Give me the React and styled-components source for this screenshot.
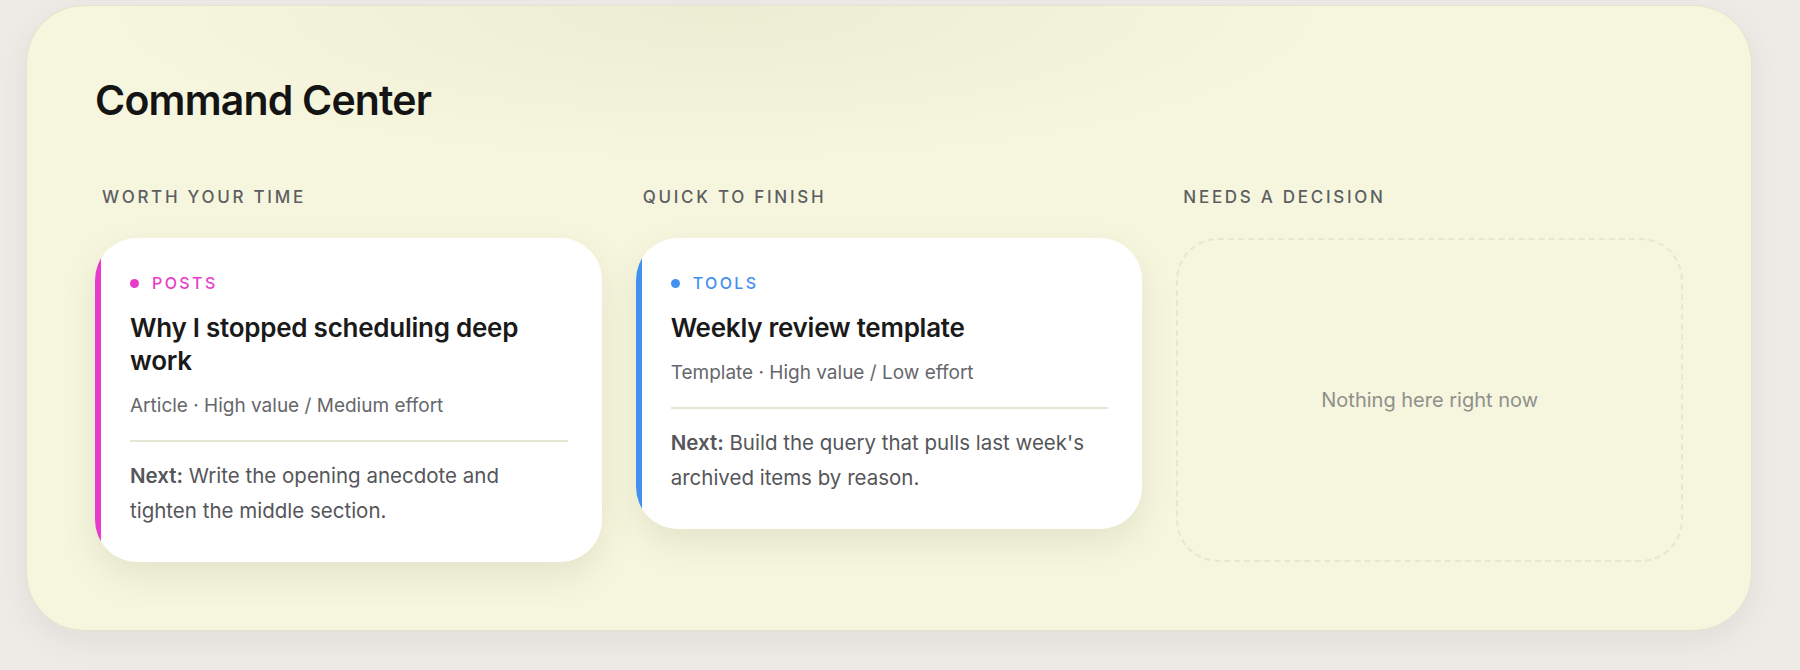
import React from "react";
import styled, { createGlobalStyle } from "styled-components";

const GlobalStyle = createGlobalStyle`
  * {
    box-sizing: border-box;
  }
  body {
    margin: 0;
    background: #ecebe6;
    font-family: Inter, "Noto Sans", sans-serif;
    -webkit-font-smoothing: antialiased;
  }
`;

const Page = styled.div`
  padding: 5px 48px 40px 26px;
`;

const Panel = styled.section`
  background: radial-gradient(
      ellipse 50% 35% at 40% 0%,
      rgba(222, 222, 196, 0.4),
      rgba(246, 246, 222, 0) 70%
    ),
    #f6f6de;
  border: 1px solid #e4e4cc;
  border-radius: 58px;
  padding: 69px 68px 68px;
  box-shadow: 0 10px 30px rgba(80, 80, 60, 0.08);
`;

const Title = styled.h1`
  margin: 0 0 62px;
  font-size: 41px;
  line-height: 50px;
  font-weight: 600;
  letter-spacing: -0.02em;
  color: #141414;
`;

const Columns = styled.div`
  display: grid;
  grid-template-columns: repeat(3, 1fr);
  gap: 34px;
`;

const Column = styled.div`
  display: flex;
  flex-direction: column;
`;

const Label = styled.h2`
  margin: 0 0 31px;
  padding-left: 7px;
  font-size: 17px;
  line-height: 20px;
  font-weight: 500;
  letter-spacing: 0.16em;
  text-transform: uppercase;
  color: #5d5e62;
`;

/* accent strip is a hard-stop background so the card radius clips it */
const Card = styled.article`
  background: linear-gradient(
    to right,
    ${(p) => p.$accent} 0 6px,
    #ffffff 6px 100%
  );
  border-radius: 42px;
  padding: 35px 34px 34px 35px;
  box-shadow: 0 14px 34px rgba(110, 110, 70, 0.12);
`;

const Tag = styled.div`
  display: flex;
  align-items: center;
  gap: 13px;
  margin-bottom: 18px;
  font-size: 16px;
  line-height: 20px;
  font-weight: 500;
  letter-spacing: 0.15em;
  text-transform: uppercase;
  color: ${(p) => p.$accent};

  &::before {
    content: "";
    width: 9px;
    height: 9px;
    border-radius: 50%;
    background: ${(p) => p.$accent};
  }
`;

const CardTitle = styled.h3`
  margin: 0 0 16px;
  font-size: 26px;
  line-height: 33px;
  font-weight: 600;
  letter-spacing: -0.01em;
  color: #1a1a1a;
`;

const Meta = styled.div`
  font-size: 19px;
  line-height: 26px;
  color: #66676b;
  padding-bottom: 21px;
  border-bottom: 2px solid #e6e6d4;
`;

const Next = styled.p`
  margin: 16px 0 0;
  font-size: 20.5px;
  line-height: 35px;
  color: #55565a;

  strong {
    font-weight: 600;
  }
`;

const Empty = styled.div`
  flex: 1;
  display: flex;
  align-items: center;
  justify-content: center;
  border: 2px dashed #e6e6d3;
  border-radius: 42px;
  font-size: 20px;
  color: #8e908b;
`;

const columns = [
  {
    label: "Worth your time",
    card: {
      tag: "Posts",
      accent: "#e93bcb",
      title: "Why I stopped scheduling deep work",
      meta: "Article · High value / Medium effort",
      next: "Write the opening anecdote and tighten the middle section.",
    },
  },
  {
    label: "Quick to finish",
    card: {
      tag: "Tools",
      accent: "#4190ef",
      title: "Weekly review template",
      meta: "Template · High value / Low effort",
      next: "Build the query that pulls last week's archived items by reason.",
    },
  },
  { label: "Needs a decision" },
];

function App() {
  return (
    <>
      <GlobalStyle />
      <Page>
        <Panel>
          <Title>Command Center</Title>
          <Columns>
            {columns.map((col) => (
              <Column key={col.label}>
                <Label>{col.label}</Label>
                {col.card ? (
                  <Card $accent={col.card.accent}>
                    <Tag $accent={col.card.accent}>{col.card.tag}</Tag>
                    <CardTitle>{col.card.title}</CardTitle>
                    <Meta>{col.card.meta}</Meta>
                    <Next>
                      <strong>Next:</strong> {col.card.next}
                    </Next>
                  </Card>
                ) : (
                  <Empty>Nothing here right now</Empty>
                )}
              </Column>
            ))}
          </Columns>
        </Panel>
      </Page>
    </>
  );
}

export default App;
